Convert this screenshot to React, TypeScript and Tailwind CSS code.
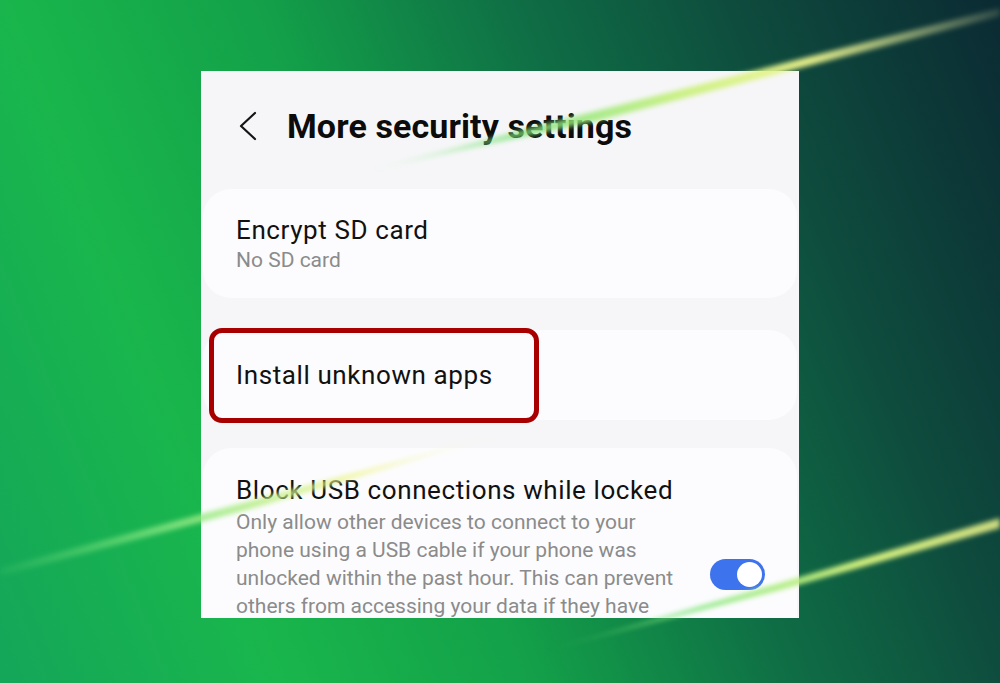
const FONT = { fontFamily: 'Roboto, "Noto Sans", sans-serif' };

function BackChevron() {
  return (
    <svg width="20" height="30" viewBox="0 0 20 30" fill="none" stroke="#141414" strokeWidth="2.2" strokeLinecap="round" strokeLinejoin="round">
      <polyline points="17,2 3,15 17,28" />
    </svg>
  );
}

function Toggle() {
  return (
    <div className="w-[55px] h-[31px] rounded-full bg-[#3e73ee] flex items-center justify-end pr-[3px] shrink-0">
      <div className="w-[25px] h-[25px] rounded-full bg-white" />
    </div>
  );
}

function Streaks() {
  return (
    <svg className="absolute inset-0 pointer-events-none" width="1000" height="683" viewBox="0 0 1000 683">
      <defs>
        <filter id="soft" x="-10%" y="-50%" width="120%" height="200%">
          <feGaussianBlur stdDeviation="2.4" />
        </filter>
        <linearGradient id="s1" x1="360" y1="172" x2="1000" y2="10" gradientUnits="userSpaceOnUse">
          <stop offset="0" stopColor="#8ee88a" stopOpacity="0" />
          <stop offset="0.25" stopColor="#7ee37a" stopOpacity="0.85" />
          <stop offset="0.5" stopColor="#c8f07e" stopOpacity="0.95" />
          <stop offset="0.7" stopColor="#eef58c" stopOpacity="0.95" />
          <stop offset="1" stopColor="#f4f7b0" stopOpacity="0.15" />
        </linearGradient>
        <linearGradient id="s2" x1="0" y1="572" x2="500" y2="436" gradientUnits="userSpaceOnUse">
          <stop offset="0" stopColor="#6ee07a" stopOpacity="0.1" />
          <stop offset="0.35" stopColor="#8ae883" stopOpacity="0.85" />
          <stop offset="0.7" stopColor="#eef58c" stopOpacity="0.9" />
          <stop offset="1" stopColor="#f4f7b0" stopOpacity="0" />
        </linearGradient>
        <linearGradient id="s3" x1="540" y1="652" x2="1000" y2="522" gradientUnits="userSpaceOnUse">
          <stop offset="0" stopColor="#5ed86a" stopOpacity="0" />
          <stop offset="0.35" stopColor="#8ae883" stopOpacity="0.95" />
          <stop offset="0.7" stopColor="#d6f27e" stopOpacity="1" />
          <stop offset="1" stopColor="#eef58c" stopOpacity="0.85" />
        </linearGradient>
      </defs>
      <g filter="url(#soft)">
        <polygon points="370,170 600,110 1000,8 1000,16 600,120" fill="url(#s1)" />
        <polygon points="0,568 250,501 500,434 250,509 0,576" fill="url(#s2)" />
        <polygon points="540,652 780,583 1000,518 1000,528 780,590" fill="url(#s3)" />
      </g>
    </svg>
  );
}

export default function App() {
  return (
    <div
      className="relative w-[1000px] h-[683px] overflow-hidden bg-[linear-gradient(68deg,#14a65a_0%,#19b64c_22%,#13a049_42%,#0f6e45_62%,#0e4a3d_80%,#0b2a33_100%)]"
      style={FONT}
    >
      <div className="pt-[71px]">
        <div className="mx-auto w-[598px] h-[547px] bg-[#f6f6f8] overflow-hidden">
          {/* header */}
          <div className="h-[118px] flex items-center pl-[37px] pb-[8px]">
            <BackChevron />
            <h1 className="ml-[29px] text-[34px] font-bold text-[#0c0c0c] tracking-[0.1px]">More security settings</h1>
          </div>

          {/* Encrypt SD card */}
          <div className="mx-[2px] h-[109px] rounded-[28px] bg-[#fcfcfe] pl-[33px] flex flex-col justify-center">
            <div className="text-[26px] text-[#111] leading-[30px] tracking-[0.6px]">Encrypt SD card</div>
            <div className="text-[21px] text-[#8b8b8b] leading-[26px] mt-[2px]">No SD card</div>
          </div>

          {/* Install unknown apps */}
          <div className="relative mx-[2px] mt-[32px] h-[90px] rounded-[28px] bg-[#fcfcfe] pl-[33px] flex items-center">
            <div className="text-[26px] text-[#111] leading-[30px] tracking-[0.6px]">Install unknown apps</div>
            <div className="absolute left-[6px] top-[-2px] w-[330px] h-[95px] rounded-[13px] border-[5px] border-[#a80000]" />
          </div>

          {/* Block USB */}
          <div className="mx-[2px] mt-[28px] h-[200px] rounded-t-[28px] bg-[#fcfcfe] pl-[33px] pr-[32px] pt-[27px] flex items-start justify-between">
            <div>
              <div className="text-[26px] text-[#111] leading-[30px] tracking-[0.6px]">Block USB connections while locked</div>
              <div className="text-[21px] text-[#8b8b8b] leading-[28px] mt-[3px]">
                Only allow other devices to connect to your
                <br />
                phone using a USB cable if your phone was
                <br />
                unlocked within the past hour. This can prevent
                <br />
                others from accessing your data if they have
              </div>
            </div>
            <div className="mt-[84px]">
              <Toggle />
            </div>
          </div>
        </div>
      </div>
      <Streaks />
    </div>
  );
}
